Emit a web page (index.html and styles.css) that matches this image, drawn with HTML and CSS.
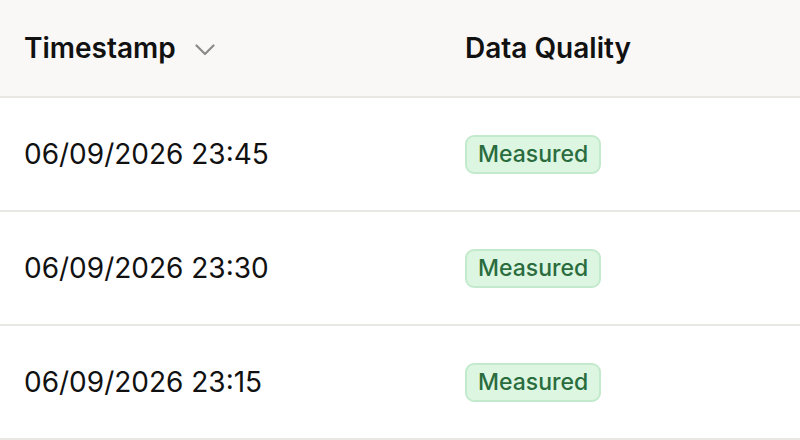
FILE: index.html
```html
<!DOCTYPE html>
<html lang="en">
<head>
    <meta charset="UTF-8">
    <meta name="viewport" content="width=device-width, initial-scale=1.0">
    <title>Readings</title>
    <link rel="stylesheet" href="styles.css">
</head>
<body>
    <table class="readings">
        <thead>
            <tr>
                <th class="col-time">
                    <span class="sort">Timestamp
                        <svg class="chevron" width="20" height="12" viewBox="0 0 20 12" fill="none">
                            <path d="M1.5 1.5 L10 10 L18.5 1.5" stroke="#8c8a87" stroke-width="2.2" stroke-linecap="round" stroke-linejoin="round"/>
                        </svg>
                    </span>
                </th>
                <th>Data Quality</th>
            </tr>
        </thead>
        <tbody>
            <tr>
                <td class="col-time">06/09/2026 23:45</td>
                <td><span class="badge">Measured</span></td>
            </tr>
            <tr>
                <td class="col-time">06/09/2026 23:30</td>
                <td><span class="badge">Measured</span></td>
            </tr>
            <tr>
                <td class="col-time">06/09/2026 23:15</td>
                <td><span class="badge">Measured</span></td>
            </tr>
        </tbody>
    </table>
</body>
</html>
```

FILE: styles.css
```css
body {
    margin: 0;
    background-color: #ffffff;
    font-family: Inter, "Noto Sans", sans-serif;
    color: #111111;
}
.readings {
    width: 100%;
    border-collapse: collapse;
    table-layout: fixed;
}
.col-time {
    width: 393px;
}
th, td {
    text-align: left;
    padding: 0 24px;
    border-bottom: 2px solid #e8e7e4;
}
th {
    height: 96px;
    background-color: #f9f8f7;
    font-size: 28px;
    font-weight: 600;
}
td {
    height: 112px;
    font-size: 28px;
    font-weight: 400;
}
.sort {
    display: inline-flex;
    align-items: center;
    gap: 19px;
}
.chevron {
    margin-top: 4px;
}
.badge {
    display: inline-block;
    padding: 5px 11px;
    background-color: #dcf6e1;
    border: 2px solid #c3eacc;
    border-radius: 9px;
    color: #2a6c3e;
    font-size: 23px;
    font-weight: 500;
    line-height: 25px;
}
```
